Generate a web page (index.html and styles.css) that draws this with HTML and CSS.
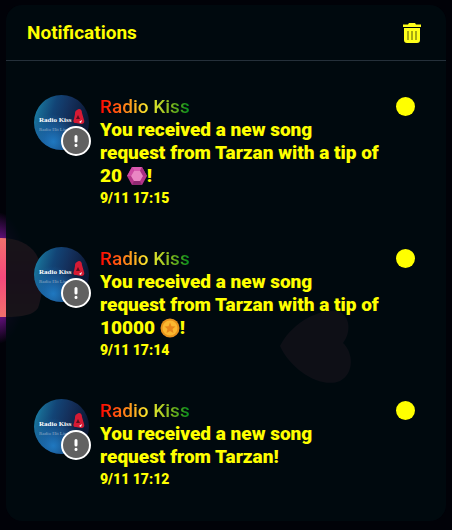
FILE: index.html
```
<!DOCTYPE html>
<html lang="en">

<head>
  <meta charset="UTF-8">
  <meta name="viewport" content="width=device-width, initial-scale=1">
  <title>Notifications</title>
  <link rel="stylesheet" href="styles.css">
</head>

<body>
  <svg class="symbols" aria-hidden="true">
    <defs>
      <linearGradient id="avatar-bg" x1="0" y1="0" x2="1" y2="0.3">
        <stop offset="0" stop-color="#1a93b8" />
        <stop offset="0.2" stop-color="#17658f" />
        <stop offset="0.4" stop-color="#124476" />
        <stop offset="0.65" stop-color="#14305c" />
        <stop offset="1" stop-color="#0c1835" />
      </linearGradient>
      <radialGradient id="avatar-glow" cx="0.35" cy="0.85" r="0.5">
        <stop offset="0" stop-color="#1f78c0" />
        <stop offset="1" stop-color="#1f78c0" stop-opacity="0" />
      </radialGradient>
      <clipPath id="avatar-clip">
        <circle cx="27.5" cy="27.5" r="27.5" />
      </clipPath>
      <symbol id="avatar" viewBox="0 0 55 55">
        <g clip-path="url(#avatar-clip)">
          <rect width="55" height="55" fill="url(#avatar-bg)" />
          <rect width="55" height="55" fill="url(#avatar-glow)" />
          <path d="M43 15c2-2 5-1 5 3l2 7c1 3-1 4-3 4l-5-1c-3 0-3-2-2-4l1-5c0-2 0-3 2-4z" fill="#d61a34" />
          <path d="M42 24l2-4 2 4z" fill="#5c0d1d" />
          <path d="M45 27l3-2-1 3z" fill="#fff" />
          <text class="logo" x="5" y="27">Radio Kiss</text>
          <text class="slogan" x="5" y="36">Radio Hit Liman</text>
        </g>
      </symbol>
    </defs>
  </svg>

  <svg class="backdrop" viewBox="0 0 452 530" preserveAspectRatio="xMinYMin slice" aria-hidden="true">
    <defs>
      <radialGradient id="halo">
        <stop offset="0.5" stop-color="#7a1297" />
        <stop offset="1" stop-color="#7a1297" stop-opacity="0" />
      </radialGradient>
      <linearGradient id="heart" x1="0" y1="0" x2="0" y2="1">
        <stop offset="0" stop-color="#f2706c" />
        <stop offset="0.5" stop-color="#f5487c" />
        <stop offset="1" stop-color="#f2706c" />
      </linearGradient>
    </defs>
    <ellipse cx="-2" cy="278" rx="30" ry="66" fill="url(#halo)" />
    <path d="M-20 242C0 234 26 238 36 254C45 270 43 294 38 308C32 318 10 318-20 316z" fill="url(#heart)" />
    <path d="M280 346C291 324 318 308 338 311C351 316 351 333 343 343C353 352 355 373 340 381C321 389 291 370 280 346z" fill="#8a4254" />
  </svg>

  <main class="panel">
    <header class="panel-header">
      <h1>Notifications</h1>
      <button class="clear" type="button" aria-label="Delete all notifications">
        <svg width="18" height="20" viewBox="0 0 18 20">
          <path d="M0 1.500h5L6 0h6l1 1.500h5V4H0zM1 5h16v12q0 3-3 3H4q-3 0-3-3z" fill="#ffff1a" />
          <path d="M5 8v9M9 8v9M13 8v9" stroke="#8c8d10" stroke-width="1.500" />
        </svg>
      </button>
    </header>

    <ul class="list">
      <li class="item">
        <div class="avatar">
          <svg class="photo"><use href="#avatar" /></svg>
          <span class="badge"><svg viewBox="0 0 4 12"><path d="M2 1.500v4.500M2 10.300v.1" /></svg></span>
        </div>
        <div class="body">
          <h2 class="name">Radio Kiss</h2>
          <p class="message">You received a new song request from Tarzan with a tip of 20 <svg class="tip" viewBox="0 0 20 20">
              <path d="M5 1h10l5 9-5 9H5l-5-9z" fill="#b5358a" />
              <path d="M5 1h10l-2 4H7z" fill="#d95bb0" />
              <path d="M0 10l5-9 2 4-3 5z" fill="#cf4aa4" />
              <path d="M15 1l5 9h-4l-3-5z" fill="#a83083" />
              <path d="M5 19h10l-2-4H7z" fill="#8f2a72" />
              <path d="M7 5h6l3 5-3 5H7l-3-5z" fill="#ea86c4" />
            </svg>!</p>
          <time class="date">9/11 17:15</time>
        </div>
        <span class="unread"></span>
      </li>
      <li class="item">
        <div class="avatar">
          <svg class="photo"><use href="#avatar" /></svg>
          <span class="badge"><svg viewBox="0 0 4 12"><path d="M2 1.500v4.500M2 10.300v.1" /></svg></span>
        </div>
        <div class="body">
          <h2 class="name">Radio Kiss</h2>
          <p class="message">You received a new song request from Tarzan with a tip of 10000 <svg class="tip" viewBox="0 0 20 20">
              <circle cx="10" cy="10" r="9.500" fill="#e8921c" />
              <circle cx="10" cy="10" r="7.500" fill="#fbb730" />
              <path d="M10 4.500l1.500 3.700 4 .3-3 2.600 1 4-3.500-2.200-3.500 2.200 1-4-3-2.600 4-.3z" fill="#e8861a" />
            </svg>!</p>
          <time class="date">9/11 17:14</time>
        </div>
        <span class="unread"></span>
      </li>
      <li class="item">
        <div class="avatar">
          <svg class="photo"><use href="#avatar" /></svg>
          <span class="badge"><svg viewBox="0 0 4 12"><path d="M2 1.500v4.500M2 10.300v.1" /></svg></span>
        </div>
        <div class="body">
          <h2 class="name">Radio Kiss</h2>
          <p class="message">You received a new song request from Tarzan!</p>
          <time class="date">9/11 17:12</time>
        </div>
        <span class="unread"></span>
      </li>
    </ul>
  </main>
</body>

</html>
```
FILE: styles.css
```
* {
  box-sizing: border-box;
}

body {
  margin: 0;
  padding: 5px 6px 9px;
  min-height: 100vh;
  background-color: #010208;
  color: #ffff00;
  font-family: Roboto, sans-serif;
}

.symbols {
  position: absolute;
  width: 0;
  height: 0;
}

.backdrop {
  position: absolute;
  inset: 0;
  width: 100%;
  height: 100%;
  z-index: -1;
}

.panel {
  border-radius: 16px;
  background-color: rgba(0, 10, 16, 0.9);
}

.panel-header {
  display: flex;
  justify-content: space-between;
  align-items: center;
  height: 56px;
  padding: 0 25px 0 21px;
  border-bottom: 1px solid #25303a;
}

.panel-header h1 {
  margin: 0;
  font-size: 19px;
  font-weight: 700;
}

.clear {
  display: flex;
  padding: 0;
  border: 0;
  background: none;
  cursor: pointer;
}

.list {
  display: flex;
  flex-direction: column;
  gap: 37px;
  margin: 0;
  padding: 34px 31px 30px 28px;
  list-style: none;
}

.item {
  display: flex;
  align-items: flex-start;
}

.avatar {
  position: relative;
  flex: none;
  height: 55px;
  margin-right: 11px;
}

.photo {
  display: block;
  width: 55px;
  height: 55px;
}

.logo {
  font: bold 7px "Liberation Serif", serif;
  fill: #ffffff;
}

.slogan {
  font: 5px "Liberation Serif", serif;
  fill: #8fa9c4;
}

.badge {
  position: absolute;
  right: -2px;
  bottom: -6px;
  display: flex;
  justify-content: center;
  align-items: center;
  width: 30px;
  height: 30px;
  border: 2px solid #ffffff;
  border-radius: 50%;
  background-color: #616161;
}

.badge svg {
  width: 4px;
  height: 12px;
  fill: none;
  stroke: #ffffff;
  stroke-width: 3;
  stroke-linecap: round;
}

.body {
  flex: 1;
  line-height: 23px;
}

.name {
  width: fit-content;
  margin: 0;
  font-size: 19px;
  font-weight: 500;
  background: linear-gradient(90deg, #ff0000, #ff8c1a 30%, #f5ee30 55%, #7ab51d 80%, #008a1c);
  background-clip: text;
  -webkit-background-clip: text;
  color: transparent;
}

.message {
  margin: 0;
  font-size: 19px;
  font-weight: 900;
}

.tip {
  width: 20px;
  height: 20px;
  margin: -4px 0;
  vertical-align: baseline;
}

.date {
  display: block;
  font-size: 14px;
  font-weight: 900;
}

.unread {
  flex: none;
  width: 19px;
  height: 19px;
  margin: 2px 0 0 15px;
  border-radius: 50%;
  background-color: #ffff00;
}
```
